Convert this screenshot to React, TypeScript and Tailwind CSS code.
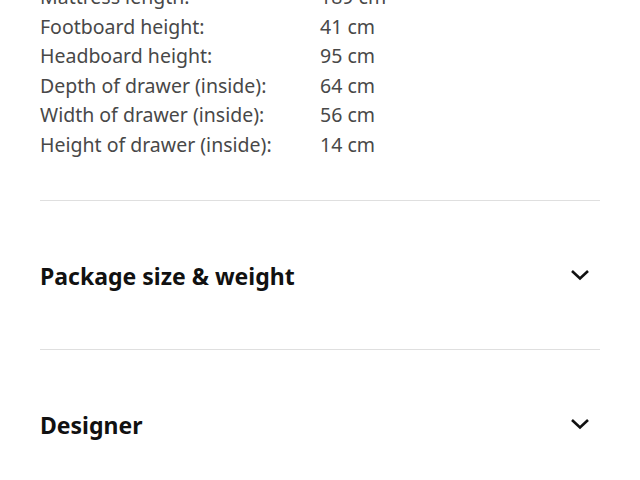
const SPECS = [
  { label: 'Mattress length:', value: '189 cm' },
  { label: 'Footboard height:', value: '41 cm' },
  { label: 'Headboard height:', value: '95 cm' },
  { label: 'Depth of drawer (inside):', value: '64 cm' },
  { label: 'Width of drawer (inside):', value: '56 cm' },
  { label: 'Height of drawer (inside):', value: '14 cm' },
]

const SECTIONS = ['Package size & weight', 'Designer']

function Chevron() {
  return (
    <svg width="20" height="12" viewBox="0 0 20 12" fill="none" className="mb-[4px] text-[#111111]">
      <path d="M2 2L10 9.5L18 2" stroke="currentColor" strokeWidth="2.6" />
    </svg>
  )
}

export default function App() {
  return (
    <div
      className="w-[640px] h-[480px] overflow-hidden bg-white px-10"
      style={{ fontFamily: '"Noto Sans", sans-serif' }}
    >
      {/* Product measurements */}
      <dl className="-mt-[18px] pb-[41px] text-[19.5px] leading-[29.5px] text-[#484848]">
        {SPECS.map((spec) => (
          <div key={spec.label} className="flex">
            <dt className="w-[280px] shrink-0">{spec.label}</dt>
            <dd>{spec.value}</dd>
          </div>
        ))}
      </dl>

      {/* Collapsible sections */}
      {SECTIONS.map((title) => (
        <button
          key={title}
          className="flex w-full items-center justify-between border-t border-[#dfdfdf] h-[149px] pt-[3px] pr-[10px] text-left"
        >
          <span className="text-[23px] font-bold text-[#111111]">{title}</span>
          <Chevron />
        </button>
      ))}
    </div>
  )
}
